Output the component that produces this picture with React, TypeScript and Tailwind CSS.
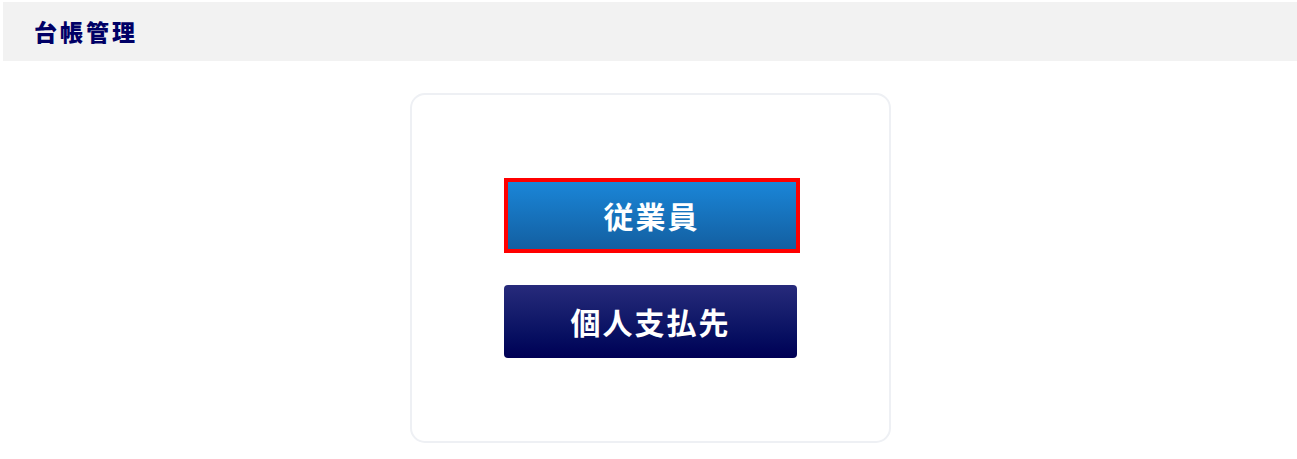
import React from "react";

export default function App() {
  const jp = { fontFamily: '"Noto Sans CJK JP", "Noto Sans", sans-serif' };
  return (
    <div className="min-h-[459px] bg-white pl-[3px] pt-[2px]" style={jp}>
      <div className="flex h-[59px] items-center bg-[#f2f2f2] pl-[31px]">
        <h1 className="text-[23px] font-black tracking-[3px] text-[#000066]">台帳管理</h1>
      </div>
      <div className="flex justify-center pt-[32px]">
        <div className="ml-[1px] flex h-[350px] w-[481px] flex-col items-center rounded-[15px] border-2 border-[#eef0f4] bg-white pt-[83px]">
          <button className="ml-[2px] flex h-[75px] w-[296px] items-center justify-center border-4 border-[#ff0000] bg-gradient-to-b from-[#1a86d8] to-[#135fa1] text-[30px] font-bold tracking-[2px] text-white">
            従業員
          </button>
          <button className="mt-[32px] flex h-[73px] w-[293px] items-center justify-center rounded-[4px] bg-gradient-to-b from-[#272a7b] to-[#000055] text-[30px] font-bold tracking-[2px] text-white">
            個人支払先
          </button>
        </div>
      </div>
    </div>
  );
}
